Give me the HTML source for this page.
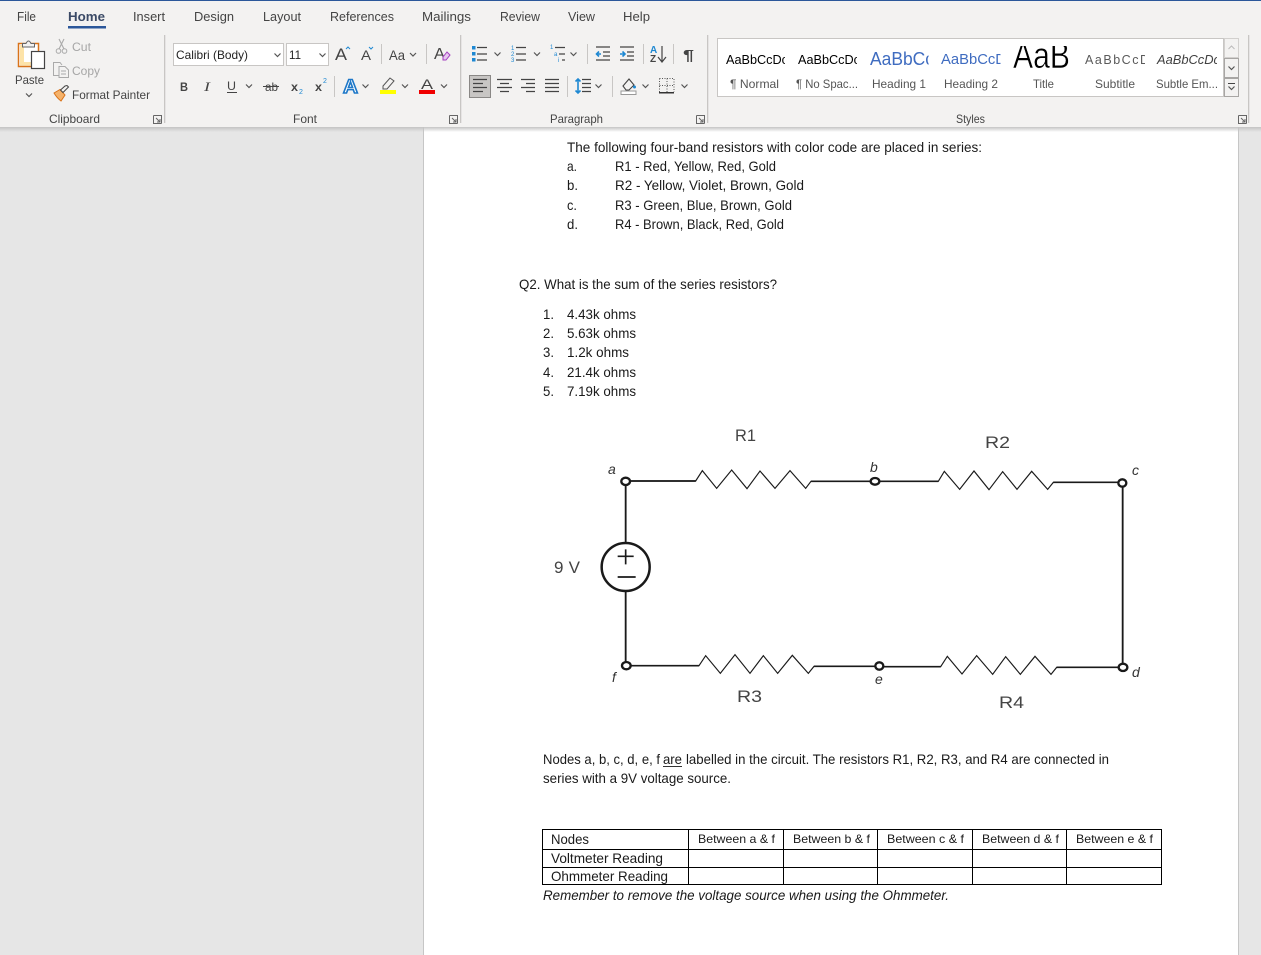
<!DOCTYPE html>
<html><head><meta charset="utf-8"><title>Word</title>
<style>
html,body{margin:0;padding:0;background:#e6e6e6;width:1261px;height:955px;overflow:hidden}
svg{display:block}
text{font-family:"Liberation Sans",sans-serif;white-space:pre}
.t{font-size:12.5px;fill:#444}
.d{font-size:13.8px;fill:#1a1a1a}
.s{font-size:12px;fill:#444}
.g{font-size:12px;fill:#a6a6a6}
.c{font-size:12px;fill:#222}
.i{fill:none;stroke:#444;stroke-width:1.2}
.b{fill:none;stroke:#1e88d2;stroke-width:1.6}
.hw{font-size:17px;fill:#444}
.n{font-size:14px;fill:#333;font-style:italic}
</style></head><body>
<svg xmlns="http://www.w3.org/2000/svg" width="1261" height="955" viewBox="0 0 1261 955">
<defs>
<linearGradient id="sh" x1="0" y1="0" x2="0" y2="1"><stop offset="0" stop-color="#c4c4c4"/><stop offset="1" stop-color="#c4c4c4" stop-opacity="0"/></linearGradient>
<clipPath id="ct"><rect x="1005" y="46" width="72" height="30"/></clipPath>
<clipPath id="c1"><rect x="720" y="46" width="65" height="26"/></clipPath>
<clipPath id="c2"><rect x="792" y="46" width="65" height="26"/></clipPath>
<clipPath id="c3"><rect x="864" y="46" width="64.500" height="26"/></clipPath>
<clipPath id="c4"><rect x="936" y="46" width="64.500" height="26"/></clipPath>
<clipPath id="c5"><rect x="1080" y="46" width="65" height="26"/></clipPath>
<clipPath id="c6"><rect x="1152" y="46" width="65" height="26"/></clipPath>
<path id="ch" d="M-3 -1.5 L0 1.5 L3 -1.5" fill="none" stroke="#555" stroke-width="1.2"/>
</defs>
<rect width="1261" height="955" fill="#e6e6e6"/>
<!-- page -->
<rect x="423.5" y="120" width="815" height="840" fill="#fff" stroke="#c6c6c6"/>
<!-- ribbon -->
<rect width="1261" height="127" fill="#f3f2f1"/>
<rect width="1261" height="1" fill="#2b579a"/>
<rect y="127" width="1261" height="5" fill="url(#sh)"/>
<!-- tabs -->
<g class="t">
<text x="17" y="21" textLength="19" lengthAdjust="spacingAndGlyphs">File</text>
<text x="68" y="21" textLength="37" lengthAdjust="spacingAndGlyphs" font-weight="bold" style="fill:#3b4a66">Home</text>
<text x="133" y="21" textLength="32" lengthAdjust="spacingAndGlyphs">Insert</text>
<text x="194" y="21" textLength="40" lengthAdjust="spacingAndGlyphs">Design</text>
<text x="263" y="21" textLength="38" lengthAdjust="spacingAndGlyphs">Layout</text>
<text x="330" y="21" textLength="64" lengthAdjust="spacingAndGlyphs">References</text>
<text x="422" y="21" textLength="49" lengthAdjust="spacingAndGlyphs">Mailings</text>
<text x="500" y="21" textLength="40" lengthAdjust="spacingAndGlyphs">Review</text>
<text x="568" y="21" textLength="27" lengthAdjust="spacingAndGlyphs">View</text>
<text x="623" y="21" textLength="27" lengthAdjust="spacingAndGlyphs">Help</text>
</g>
<rect x="68" y="26" width="38" height="2.5" fill="#2b579a"/>
<!-- separators -->
<g fill="#c8c6c4">
<rect x="164" y="35" width="1.3" height="88"/><rect x="460" y="35" width="1.3" height="88"/>
<rect x="707" y="35" width="1.3" height="88"/><rect x="1248" y="35" width="1.3" height="88"/>
</g>
<!-- clipboard -->
<rect x="18.500" y="43.500" width="20" height="23" fill="#fff" stroke="#d9731a" stroke-width="1.5"/>
<path d="M20 45 H24 V62 H31 V65.500 H20 Z" fill="#fde3a8"/>
<path d="M22.500 47 V43.500 H26 Q28.500 38.500 31 43.500 H34.500 V47 Z" fill="#f3f2f1" stroke="#666" stroke-width="1"/>
<rect x="31.500" y="51.500" width="13" height="17" fill="#fff" stroke="#444" stroke-width="1.2"/>
<text class="s" x="15" y="84" textLength="29" lengthAdjust="spacingAndGlyphs">Paste</text>
<use href="#ch" x="29" y="95"/>
<path d="M59 39 L64 49 M64 39 L59 49" fill="none" stroke="#aaa" stroke-width="1.1"/><circle cx="58.500" cy="51" r="2.300" fill="none" stroke="#aaa"/><circle cx="64.500" cy="51" r="2.300" fill="none" stroke="#aaa"/>
<text class="g" x="72" y="51" textLength="19" lengthAdjust="spacingAndGlyphs">Cut</text>
<path d="M59 75.500 H53.500 V62.500 H60 L62 65 M59 66.500 H65 L68.500 70 V77.500 H59 Z M61 71 H66 M61 74 H66" fill="none" stroke="#aaa" stroke-width="1"/>
<text class="g" x="72" y="75" textLength="28" lengthAdjust="spacingAndGlyphs">Copy</text>
<path d="M54 93 L60 89.500 L65 95 L61 101 Q57 98 54 93 Z" fill="#f5b26a" stroke="#d9731a"/><path d="M60.500 90 L63 92.500 L68.500 87 L67 85.500 L65 86 Z" fill="#f3f2f1" stroke="#444"/>
<text class="s" x="72" y="99" textLength="78" lengthAdjust="spacingAndGlyphs">Format Painter</text>
<text class="s" x="49" y="123" textLength="51" lengthAdjust="spacingAndGlyphs">Clipboard</text>
<text class="s" x="293" y="123" textLength="24" lengthAdjust="spacingAndGlyphs">Font</text>
<text class="s" x="550" y="123" textLength="53" lengthAdjust="spacingAndGlyphs">Paragraph</text>
<text class="s" x="956" y="123" textLength="29" lengthAdjust="spacingAndGlyphs">Styles</text>
<g fill="none" stroke="#666" stroke-width="1">
<path d="M153.500 115.500 H161.500 V123.500 M153.500 115.500 V123.500 H161.500 M156 118 L160 122 M160 119 V122 H157"/>
<path d="M449.500 115.500 H457.500 V123.500 M449.500 115.500 V123.500 H457.500 M452 118 L456 122 M456 119 V122 H453"/>
<path d="M696.500 115.500 H704.500 V123.500 M696.500 115.500 V123.500 H704.500 M699 118 L703 122 M703 119 V122 H700"/>
<path d="M1238.500 115.500 H1246.500 V123.500 M1238.500 115.500 V123.500 H1246.500 M1241 118 L1245 122 M1245 119 V122 H1242"/>
</g>
<!-- font group -->
<rect x="173.500" y="43.500" width="110" height="22" fill="#fff" stroke="#c8c6c4"/>
<rect x="286.500" y="43.500" width="42" height="22" fill="#fff" stroke="#c8c6c4"/>
<text class="c" x="176" y="59" textLength="72" lengthAdjust="spacingAndGlyphs">Calibri (Body)</text>
<text class="c" x="289" y="59" textLength="12" lengthAdjust="spacingAndGlyphs">11</text>
<use href="#ch" x="277.500" y="55"/><use href="#ch" x="322.500" y="55"/>
<text x="335" y="60" font-size="17" fill="#444" textLength="12" lengthAdjust="spacingAndGlyphs">A</text>
<path d="M346 49 L348 47 L350 49" fill="none" stroke="#1e88d2"/>
<text x="361" y="60" font-size="14" fill="#444" textLength="10" lengthAdjust="spacingAndGlyphs">A</text>
<path d="M369 47 L371 49 L373 47" fill="none" stroke="#1e88d2"/>
<rect x="381" y="44" width="1" height="20" fill="#c8c6c4"/>
<text x="389" y="60" font-size="14" fill="#444" textLength="16" lengthAdjust="spacingAndGlyphs">Aa</text>
<use href="#ch" x="413" y="54.500"/>
<rect x="426" y="44" width="1" height="20" fill="#c8c6c4"/>
<text x="434" y="59" font-size="16" fill="#444" textLength="11" lengthAdjust="spacingAndGlyphs">A</text>
<path d="M443 57 L447 52 L450 55 L446 60 H443 Z" fill="#e7c6f0" stroke="#a33fbf"/>
<text x="180" y="91" font-size="12" font-weight="bold" fill="#444" textLength="8" lengthAdjust="spacingAndGlyphs">B</text>
<text x="204" y="91" font-size="13" font-style="italic" fill="#444" textLength="6" lengthAdjust="spacingAndGlyphs" style="font-family:'Liberation Serif',serif">I</text>
<text x="227" y="90" font-size="12" fill="#444" textLength="9" lengthAdjust="spacingAndGlyphs">U</text><rect x="227" y="92" width="10" height="1" fill="#444"/>
<use href="#ch" x="249" y="86"/>
<text x="265" y="91" font-size="12" fill="#444" textLength="13" lengthAdjust="spacingAndGlyphs">ab</text><rect x="263" y="86" width="16" height="1" fill="#444"/>
<text x="291" y="91" font-size="12" font-weight="bold" fill="#444" textLength="7" lengthAdjust="spacingAndGlyphs">x</text><text x="299" y="94" font-size="7" fill="#1e88d2">2</text>
<text x="315" y="91" font-size="12" font-weight="bold" fill="#444" textLength="7" lengthAdjust="spacingAndGlyphs">x</text><text x="323" y="83" font-size="7" fill="#1e88d2">2</text>
<rect x="334" y="76" width="1" height="21" fill="#c8c6c4"/>
<text x="343" y="93" font-size="19" font-weight="bold" fill="#fff" stroke="#1e78c8" stroke-width="1.500" textLength="15" lengthAdjust="spacingAndGlyphs">A</text>
<use href="#ch" x="365.500" y="86"/>
<path d="M383 86 L390 78 L394 81 L387 89 H383 Z" fill="none" stroke="#555"/>
<rect x="380" y="90" width="16" height="4" fill="#ffff00"/>
<use href="#ch" x="405" y="86"/>
<text x="421" y="89" font-size="14" fill="#444" textLength="12" lengthAdjust="spacingAndGlyphs">A</text>
<rect x="419" y="90" width="16" height="4" fill="#f00000"/>
<use href="#ch" x="444" y="86"/>
<!-- paragraph: row 1 -->
<g fill="#1e88d2"><rect x="472" y="46" width="3.500" height="3.500"/><rect x="472" y="52" width="3.500" height="3.500"/><rect x="472" y="58" width="3.500" height="3.500"/></g>
<path class="i" d="M477 47.500 H487 M477 54 H487 M477 60 H487"/>
<use href="#ch" x="497.500" y="54"/>
<text x="511" y="50" font-size="6" fill="#1e88d2">1</text><text x="511" y="56" font-size="6" fill="#1e88d2">2</text><text x="511" y="62" font-size="6" fill="#1e88d2">3</text>
<path class="i" d="M516 47.500 H526 M516 54 H526 M516 60 H526"/>
<use href="#ch" x="537" y="54"/>
<text x="550" y="49" font-size="6" fill="#1e88d2">1</text><text x="554" y="56" font-size="6" fill="#1e88d2">a</text><text x="558" y="62" font-size="6" fill="#1e88d2">i</text>
<path class="i" d="M555 47.500 H565 M559 54 H565 M562 60 H565"/>
<use href="#ch" x="573.500" y="54"/>
<rect x="587" y="44" width="1" height="20" fill="#c8c6c4"/>
<path class="i" d="M596 47 H610 M603 52 H610 M603 56 H610 M596 60 H610"/><path class="b" d="M601 54 H596.500 M599 51.500 L596.500 54 L599 56.500"/>
<path class="i" d="M620 47 H634 M627 52 H634 M627 56 H634 M620 60 H634"/><path class="b" d="M620 54 H625 M622.500 51.500 L625 54 L622.500 56.500"/>
<rect x="643" y="44" width="1" height="20" fill="#c8c6c4"/>
<text x="650" y="53" font-size="10" font-weight="bold" fill="#1e88d2">A</text><text x="650" y="62" font-size="10" font-weight="bold" fill="#444">Z</text>
<path class="i" d="M662 46 V61 M658 57 L662 62 L666 57"/>
<rect x="673" y="44" width="1" height="20" fill="#c8c6c4"/>
<text x="683" y="60" font-size="15" font-weight="bold" fill="#444" textLength="11" lengthAdjust="spacingAndGlyphs">¶</text>
<!-- row 2 -->
<rect x="469.500" y="75.500" width="21" height="22" fill="#c8c6c4" stroke="#8a8886"/>
<path class="i" d="M473 79.500 H487 M473 83.500 H483 M473 87.500 H487 M473 91.500 H483"/>
<path class="i" d="M497 79.500 H512 M500 83.500 H509 M497 87.500 H512 M500 91.500 H509"/>
<path class="i" d="M521 79.500 H535 M526 83.500 H535 M521 87.500 H535 M526 91.500 H535"/>
<path class="i" d="M545 79.500 H559 M545 83.500 H559 M545 87.500 H559 M545 91.500 H559"/>
<rect x="567" y="76" width="1" height="21" fill="#c8c6c4"/>
<path class="i" d="M582 79.500 H591 M582 83.500 H591 M582 87.500 H591 M582 91.500 H591"/><path class="b" d="M578 79 V93 M575.500 81.500 L578 79 L580.500 81.500 M575.500 90.500 L578 93 L580.500 90.500"/>
<use href="#ch" x="598.500" y="86"/>
<rect x="612" y="76" width="1" height="21" fill="#c8c6c4"/>
<path d="M623 86 L629 79 L634 85 L629 90 H626 Z" fill="none" stroke="#444" stroke-width="1.100"/><circle cx="634.500" cy="87" r="1.500" fill="#1e88d2"/>
<rect x="621" y="91" width="15" height="3.500" fill="#fff" stroke="#999"/>
<use href="#ch" x="645.500" y="86"/>
<path d="M659.500 78.500 H674 V92 M659.500 78.500 V92 M667 78.500 V92 M659.500 85.500 H674" fill="none" stroke="#555" stroke-dasharray="1 1.500"/>
<rect x="659" y="92" width="15" height="1.500" fill="#333"/>
<use href="#ch" x="684.500" y="86"/>
<!-- styles gallery -->
<rect x="717.500" y="38.500" width="506" height="58" fill="#fff" stroke="#c8c6c4"/>
<rect x="1224.500" y="38.500" width="14" height="19" fill="#f3f2f1" stroke="#d2d0ce"/>
<rect x="1224.500" y="58.500" width="14" height="19" fill="#f3f2f1" stroke="#a8a6a4"/>
<rect x="1224.500" y="78.500" width="14" height="18" fill="#f3f2f1" stroke="#a8a6a4"/>
<path d="M1228.500 49 L1231.500 46 L1234.500 49" fill="none" stroke="#bbb"/>
<use href="#ch" x="1231.500" y="68"/>
<rect x="1228" y="83" width="7" height="1" fill="#444"/><use href="#ch" x="1231.500" y="88"/>
<text x="726" y="64" font-size="12.500" fill="#000" textLength="62" lengthAdjust="spacingAndGlyphs" clip-path="url(#c1)">AaBbCcDc</text>
<text x="798" y="64" font-size="12.500" fill="#000" textLength="62" lengthAdjust="spacingAndGlyphs" clip-path="url(#c2)">AaBbCcDc</text>
<text x="870" y="65" font-size="18" fill="#3f6cc0" textLength="64" lengthAdjust="spacingAndGlyphs" clip-path="url(#c3)">AaBbCc</text>
<text x="941" y="64" font-size="15" fill="#3f6cc0" textLength="65" lengthAdjust="spacingAndGlyphs" clip-path="url(#c4)">AaBbCcD</text>
<text x="1013" y="68" font-size="37" fill="#000" stroke="#fff" stroke-width="0.500" textLength="57" lengthAdjust="spacingAndGlyphs" clip-path="url(#ct)">AaB</text>
<text x="1085" y="64" font-size="12.500" fill="#5a5a5a" textLength="64" lengthAdjust="spacing" clip-path="url(#c5)">AaBbCcD</text>
<text x="1157" y="64" font-size="12.500" font-style="italic" fill="#404040" textLength="63" lengthAdjust="spacingAndGlyphs" clip-path="url(#c6)">AaBbCcDc</text>
<g class="s" style="fill:#555">
<text x="730" y="88" textLength="49" lengthAdjust="spacingAndGlyphs">¶ Normal</text>
<text x="796" y="88" textLength="62" lengthAdjust="spacingAndGlyphs">¶ No Spac...</text>
<text x="872" y="88" textLength="54" lengthAdjust="spacingAndGlyphs">Heading 1</text>
<text x="944" y="88" textLength="54" lengthAdjust="spacingAndGlyphs">Heading 2</text>
<text x="1033" y="88" textLength="21" lengthAdjust="spacingAndGlyphs">Title</text>
<text x="1095" y="88" textLength="40" lengthAdjust="spacingAndGlyphs">Subtitle</text>
<text x="1156" y="88" textLength="62" lengthAdjust="spacingAndGlyphs">Subtle Em...</text>
</g>
<!-- document -->
<g class="d">
<text x="567" y="152" textLength="415" lengthAdjust="spacingAndGlyphs">The following four-band resistors with color code are placed in series:</text>
<text x="567" y="171" textLength="10" lengthAdjust="spacingAndGlyphs">a.</text><text x="615" y="171" textLength="161" lengthAdjust="spacingAndGlyphs">R1 - Red, Yellow, Red, Gold</text>
<text x="567" y="190" textLength="11" lengthAdjust="spacingAndGlyphs">b.</text><text x="615" y="190" textLength="189" lengthAdjust="spacingAndGlyphs">R2 - Yellow, Violet, Brown, Gold</text>
<text x="567" y="210" textLength="10" lengthAdjust="spacingAndGlyphs">c.</text><text x="615" y="210" textLength="177" lengthAdjust="spacingAndGlyphs">R3 - Green, Blue, Brown, Gold</text>
<text x="567" y="229" textLength="11" lengthAdjust="spacingAndGlyphs">d.</text><text x="615" y="229" textLength="169" lengthAdjust="spacingAndGlyphs">R4 - Brown, Black, Red, Gold</text>
<text x="519" y="289" textLength="258" lengthAdjust="spacingAndGlyphs">Q2. What is the sum of the series resistors?</text>
<text x="543" y="319" textLength="11" lengthAdjust="spacingAndGlyphs">1.</text><text x="567" y="319" textLength="69" lengthAdjust="spacingAndGlyphs">4.43k ohms</text>
<text x="543" y="338" textLength="11" lengthAdjust="spacingAndGlyphs">2.</text><text x="567" y="338" textLength="69" lengthAdjust="spacingAndGlyphs">5.63k ohms</text>
<text x="543" y="357" textLength="11" lengthAdjust="spacingAndGlyphs">3.</text><text x="567" y="357" textLength="62" lengthAdjust="spacingAndGlyphs">1.2k ohms</text>
<text x="543" y="377" textLength="11" lengthAdjust="spacingAndGlyphs">4.</text><text x="567" y="377" textLength="69" lengthAdjust="spacingAndGlyphs">21.4k ohms</text>
<text x="543" y="396" textLength="11" lengthAdjust="spacingAndGlyphs">5.</text><text x="567" y="396" textLength="69" lengthAdjust="spacingAndGlyphs">7.19k ohms</text>
<text x="543" y="764" textLength="117" lengthAdjust="spacingAndGlyphs">Nodes a, b, c, d, e, f</text>
<text x="663" y="764" textLength="19" lengthAdjust="spacingAndGlyphs">are</text>
<text x="686" y="764" textLength="423" lengthAdjust="spacingAndGlyphs">labelled in the circuit. The resistors R1, R2, R3, and R4 are connected in</text>
<text x="543" y="783" textLength="188" lengthAdjust="spacingAndGlyphs">series with a 9V voltage source.</text>
</g>
<rect x="663" y="766" width="19" height="1" fill="#333"/>
<!-- circuit -->
<g transform="translate(540 420) scale(0.33333)" fill="none" stroke="#1a1a1a" stroke-width="3.500">
<path d="M272 183 H467 L487 152 L530 205 L575 150 L621 206 L660 153 L705 205 L750 152 L797 205 L813 184 H1010"/>
<path d="M272 737 H477 L497 707 L541 760 L585 704 L630 760 L670 707 L713 760 L757 706 L805 760 L822 739 H1020"/>
<path d="M272 183 H467 M813 184 H1010 M272 737 H477 M822 739 H1020" stroke-width="5"/>
<path d="M257 197 V367 M257 515 V725" stroke-width="5.500"/>
<circle cx="257" cy="441" r="72" stroke-width="7.500"/>
<path d="M233 409 H281 M257 388 V433 M233 471 H287" stroke-width="5"/>
<ellipse cx="257" cy="184" rx="13" ry="11" fill="#fff" stroke-width="7"/>
<ellipse cx="259" cy="737" rx="13" ry="11" fill="#fff" stroke-width="7"/>
</g>
<g transform="translate(850 420) scale(0.33333)" fill="none" stroke="#1a1a1a" stroke-width="3.500">
<path d="M90 184 H265 L283 154 L329 208 L372 153 L417 209 L458 155 L501 208 L545 154 L593 208 L610 187 H803"/>
<path d="M102 740 H272 L292 709 L336 762 L380 707 L428 763 L467 710 L511 763 L555 709 L603 763 L620 742 H805"/>
<path d="M90 184 H265 M610 187 H803 M102 740 H272 M620 742 H805" stroke-width="5"/>
<path d="M818 202 V730" stroke-width="5.500"/>
<ellipse cx="75" cy="184" rx="13" ry="10" fill="#fff" stroke-width="7"/>
<ellipse cx="88" cy="738" rx="12" ry="11" fill="#fff" stroke-width="7"/>
<ellipse cx="817" cy="189" rx="12" ry="11" fill="#fff" stroke-width="7"/>
<ellipse cx="819" cy="742" rx="13" ry="11" fill="#fff" stroke-width="7"/>
</g>
<text class="hw" x="735" y="441" textLength="21" lengthAdjust="spacingAndGlyphs">R1</text>
<text class="hw" x="985" y="448" textLength="25" lengthAdjust="spacingAndGlyphs">R2</text>
<text class="hw" x="737" y="702" textLength="25" lengthAdjust="spacingAndGlyphs">R3</text>
<text class="hw" x="999" y="708" textLength="25" lengthAdjust="spacingAndGlyphs">R4</text>
<text class="hw" x="554" y="573" textLength="26" lengthAdjust="spacing">9 V</text>
<text class="n" x="608" y="474">a</text><text class="n" x="870" y="472">b</text><text class="n" x="1132" y="475">c</text>
<text class="n" x="1132" y="677">d</text><text class="n" x="875" y="684">e</text><text class="n" x="612" y="682">f</text>
<!-- table -->
<g fill="none" stroke="#000" stroke-width="1">
<rect x="542.500" y="829.500" width="619" height="55"/>
<path d="M542.500 849.500 H1161.500 M542.500 867.500 H1161.500 M688.500 829.500 V884.500 M783.500 829.500 V884.500 M877.500 829.500 V884.500 M972.500 829.500 V884.500 M1066.500 829.500 V884.500"/>
</g>
<g class="d">
<text x="551" y="844" textLength="38" lengthAdjust="spacingAndGlyphs">Nodes</text>
<text x="551" y="863" textLength="112" lengthAdjust="spacingAndGlyphs">Voltmeter Reading</text>
<text x="551" y="881" textLength="117" lengthAdjust="spacingAndGlyphs">Ohmmeter Reading</text>
</g>
<g class="d" style="font-size:12px">
<text x="698" y="843" textLength="77" lengthAdjust="spacingAndGlyphs">Between a &amp; f</text>
<text x="793" y="843" textLength="77" lengthAdjust="spacingAndGlyphs">Between b &amp; f</text>
<text x="887" y="843" textLength="77" lengthAdjust="spacingAndGlyphs">Between c &amp; f</text>
<text x="982" y="843" textLength="77" lengthAdjust="spacingAndGlyphs">Between d &amp; f</text>
<text x="1076" y="843" textLength="77" lengthAdjust="spacingAndGlyphs">Between e &amp; f</text>
</g>
<text class="d" x="543" y="900" font-style="italic" textLength="406" lengthAdjust="spacingAndGlyphs">Remember to remove the voltage source when using the Ohmmeter.</text>
</svg>
</body></html>
